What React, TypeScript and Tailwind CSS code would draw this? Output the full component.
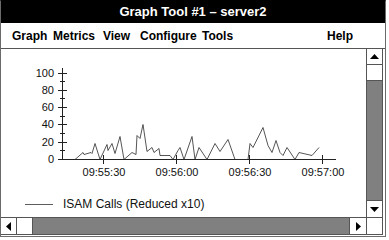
const data: [number, number][] = [
  [75, 159], [83, 152], [84, 154], [91, 152], [92, 153], [95, 143], [100, 159],
  [107, 144], [108, 150], [112, 143], [115, 153], [120, 136], [124, 159],
  [132, 152], [136, 154], [137, 135], [140, 138], [143, 124], [147, 151],
  [152, 147], [154, 152], [159, 148], [160, 155], [170, 155], [173, 159],
  [178, 150], [180, 147], [184, 159], [192, 136], [195, 159], [199, 147],
  [207, 159], [215, 143], [220, 151], [228, 139], [235, 159], [248, 159],
  [250, 143], [253, 147], [263, 127], [268, 145], [272, 152], [276, 140],
  [280, 152], [283, 155], [287, 147], [295, 159], [299, 152], [312, 155],
  [319, 147],
];

const yLabels = [100, 80, 60, 40, 20, 0];
const xTicks = [
  { x: 103, label: "09:55:30" },
  { x: 176, label: "09:56:00" },
  { x: 249, label: "09:56:30" },
  { x: 322, label: "09:57:00" },
];

const yOf = (v: number) => 159 - v * 0.865;

function Chart() {
  return (
    <svg width="365" height="168" className="block">
      {/* page coordinates */}
      <g transform="translate(-1,-49)" fontFamily="'Liberation Sans', Arial, sans-serif" fill="none" stroke="#000" strokeWidth="1">
        {/* y axis */}
        <line x1="62.5" y1="68" x2="62.5" y2="159.5" stroke="#222" />
        {yLabels.map((v) => (
          <g key={v}>
            <line x1="58" y1={Math.round(yOf(v)) + 0.5} x2="67" y2={Math.round(yOf(v)) + 0.5} stroke="#222" />
            <text x="54" y={yOf(v) + 4} fontSize="11" fill="#111" stroke="none" textAnchor="end">
              {v}
            </text>
          </g>
        ))}
        {yLabels.slice(0, 5).map((v) => (
          <line key={"m" + v} x1="60" y1={Math.round(yOf(v - 10)) + 0.5} x2="65" y2={Math.round(yOf(v - 10)) + 0.5} stroke="#222" />
        ))}
        {/* x axis */}
        <line x1="62" y1="159.5" x2="336" y2="159.5" stroke="#222" />
        {xTicks.map((t) => (
          <g key={t.label}>
            <line x1={t.x + 0.5} y1="155" x2={t.x + 0.5} y2="164" stroke="#222" />
            <text x={t.x + 1} y="176" fontSize="11" fill="#111" stroke="none" textAnchor="middle">
              {t.label}
            </text>
          </g>
        ))}
        {/* series */}
        <polyline points={data.map(([x, y]) => `${x},${y + 0.5}`).join(" ")} stroke="#2a2a2a" strokeWidth="0.8" />
        {/* legend */}
        <line x1="25" y1="204.5" x2="53" y2="204.5" stroke="#333" strokeWidth="0.8" />
        <text x="63" y="208" fontSize="12" fill="#111" stroke="none">
          ISAM Calls (Reduced x10)
        </text>
      </g>
    </svg>
  );
}

function Tri({ dir }: { dir: "up" | "down" | "left" | "right" }) {
  const pts =
    dir === "up"
      ? "0,5 9,5 4.5,0"
      : dir === "down"
      ? "0,0 9,0 4.5,5"
      : dir === "left"
      ? "5,0 5,9 0,4.5"
      : "0,0 0,9 5,4.5";
  const w = dir === "up" || dir === "down" ? 9 : 5;
  const h = dir === "up" || dir === "down" ? 5 : 9;
  return (
    <svg width={w} height={h} className="block">
      <polygon points={pts} fill="#000" />
    </svg>
  );
}

export default function App() {
  return (
    <div className="w-[389px] h-[240px] bg-white font-['Liberation_Sans',Arial,sans-serif] text-black">
      <div className="w-[386px] h-[237px] border border-[#6b6b6b] border-t-black flex flex-col">
        {/* Title bar */}
        <div className="h-[22px] bg-black text-white text-[13px] font-bold flex items-center justify-center">
          Graph Tool #1 – server2
        </div>

        {/* Menu bar */}
        <div className="h-[26px] border-b border-[#555] flex items-center pl-[11px] pr-[32px] text-[12px] font-bold">
          <span className="w-[41px]">Graph</span>
          <span className="w-[50px]">Metrics</span>
          <span className="w-[37px]">View</span>
          <span className="w-[62px]">Configure</span>
          <span>Tools</span>
          <span className="ml-auto">Help</span>
        </div>

        {/* Body */}
        <div className="flex-1 flex flex-col pr-[2px] pb-[1px]">
          <div className="flex-1 flex">
            <div className="flex-1 overflow-hidden">
              <Chart />
            </div>
            {/* vertical scrollbar */}
            <div className="w-[17px] border-x border-[#555] flex flex-col">
              <div className="h-[16px] border-b border-[#555] flex items-center justify-center">
                <Tri dir="up" />
              </div>
              <div className="h-[16px] border-b border-[#555] bg-white" />
              <div className="flex-1 bg-[#808080]" />
              <div className="h-[17px] border-t border-[#555] flex items-center justify-center">
                <Tri dir="down" />
              </div>
            </div>
          </div>
          {/* horizontal scrollbar row */}
          <div className="h-[18px] flex border-y border-[#555]">
            <div className="flex-1 flex">
              <div className="w-[16px] border-r border-[#555] flex items-center justify-center">
                <Tri dir="left" />
              </div>
              <div className="w-[16px] border-r border-[#555] bg-white" />
              <div className="flex-1 bg-[#808080]" />
              <div className="w-[17px] border-l border-[#555] flex items-center justify-center">
                <Tri dir="right" />
              </div>
            </div>
            <div className="w-[17px] border-x border-[#555] bg-white" />
          </div>
        </div>
      </div>
    </div>
  );
}
